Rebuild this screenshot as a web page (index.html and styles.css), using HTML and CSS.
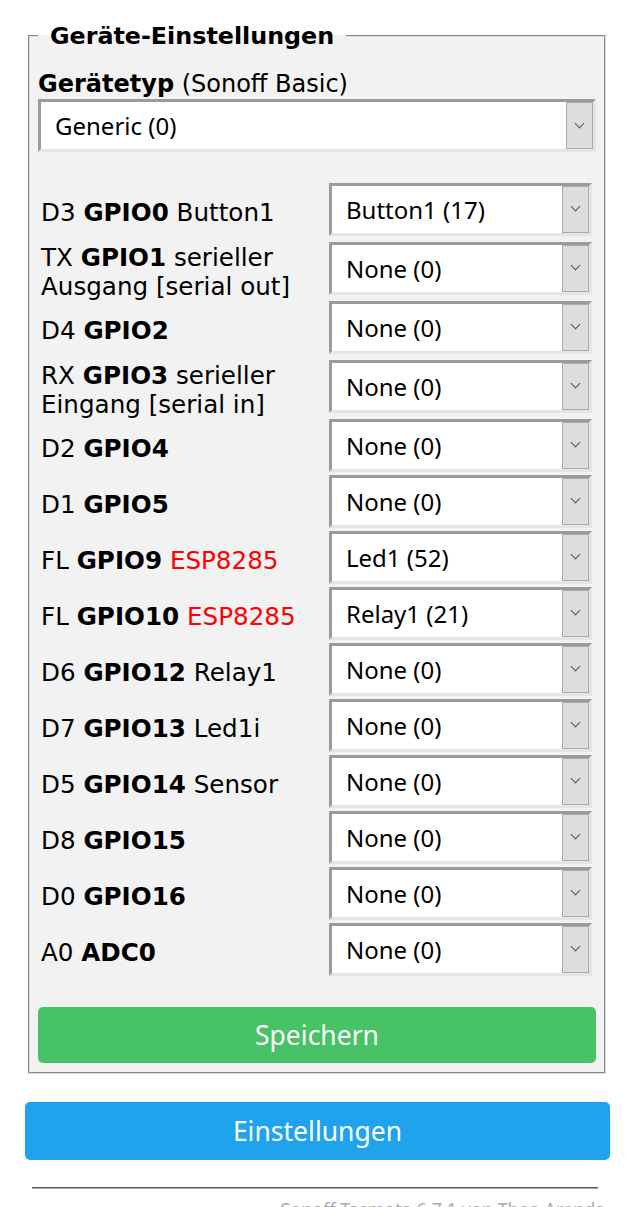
FILE: index.html
```html
<!DOCTYPE html>
<html lang="de">
<head>
    <meta charset="UTF-8">
    <meta name="viewport" content="width=device-width, initial-scale=1.0">
    <title>Sonoff Basic - Geräte-Einstellungen</title>
    <link rel="stylesheet" href="styles.css">
</head>
<body>
    <div class="main">
        <fieldset class="box">
            <legend class="box-title">Geräte-Einstellungen</legend>
            <form>
                <div class="type-line"><b>Gerätetyp</b> (Sonoff Basic)</div>
                <div class="sel">
                    <select><option>Generic (0)</option></select>
                </div>

                <div class="pins">
                    <div class="pin-row">
                        <div class="pin-label">D3 <b>GPIO0</b> Button1</div>
                        <div class="sel"><select><option>Button1 (17)</option></select></div>
                    </div>
                    <div class="pin-row">
                        <div class="pin-label">TX <b>GPIO1</b> serieller Ausgang [serial out]</div>
                        <div class="sel"><select><option>None (0)</option></select></div>
                    </div>
                    <div class="pin-row">
                        <div class="pin-label">D4 <b>GPIO2</b></div>
                        <div class="sel"><select><option>None (0)</option></select></div>
                    </div>
                    <div class="pin-row">
                        <div class="pin-label">RX <b>GPIO3</b> serieller Eingang [serial in]</div>
                        <div class="sel"><select><option>None (0)</option></select></div>
                    </div>
                    <div class="pin-row">
                        <div class="pin-label">D2 <b>GPIO4</b></div>
                        <div class="sel"><select><option>None (0)</option></select></div>
                    </div>
                    <div class="pin-row">
                        <div class="pin-label">D1 <b>GPIO5</b></div>
                        <div class="sel"><select><option>None (0)</option></select></div>
                    </div>
                    <div class="pin-row">
                        <div class="pin-label">FL <b>GPIO9</b> <span class="warn">ESP8285</span></div>
                        <div class="sel"><select><option>Led1 (52)</option></select></div>
                    </div>
                    <div class="pin-row">
                        <div class="pin-label">FL <b>GPIO10</b> <span class="warn">ESP8285</span></div>
                        <div class="sel"><select><option>Relay1 (21)</option></select></div>
                    </div>
                    <div class="pin-row">
                        <div class="pin-label">D6 <b>GPIO12</b> Relay1</div>
                        <div class="sel"><select><option>None (0)</option></select></div>
                    </div>
                    <div class="pin-row">
                        <div class="pin-label">D7 <b>GPIO13</b> Led1i</div>
                        <div class="sel"><select><option>None (0)</option></select></div>
                    </div>
                    <div class="pin-row">
                        <div class="pin-label">D5 <b>GPIO14</b> Sensor</div>
                        <div class="sel"><select><option>None (0)</option></select></div>
                    </div>
                    <div class="pin-row">
                        <div class="pin-label">D8 <b>GPIO15</b></div>
                        <div class="sel"><select><option>None (0)</option></select></div>
                    </div>
                    <div class="pin-row">
                        <div class="pin-label">D0 <b>GPIO16</b></div>
                        <div class="sel"><select><option>None (0)</option></select></div>
                    </div>
                    <div class="pin-row">
                        <div class="pin-label">A0 <b>ADC0</b></div>
                        <div class="sel"><select><option>None (0)</option></select></div>
                    </div>
                </div>

                <button type="button" class="btn btn-save">Speichern</button>
            </form>
        </fieldset>

        <button type="button" class="btn btn-back">Einstellungen</button>

        <div class="footer">
            <hr>
            <div class="footer-text">Sonoff Tasmota 6.7.1 von Theo Arends</div>
        </div>
    </div>
</body>
</html>
```

FILE: styles.css
```css
* {
    box-sizing: border-box;
}

html, body {
    margin: 0;
    padding: 0;
    background: #fff;
    overflow: hidden;
}

body {
    font-family: "DejaVu Sans", Verdana, sans-serif;
    font-size: 24px;
    color: #000;
}

.main {
    width: 585px;
    margin-left: 25px;
    padding-top: 22px;
}

.box {
    margin: 0 4px 0 3px;
    padding: 0 8px 9px 8px;
    background: #f2f2f2;
    border: 2px groove #dcdcdc;
}

.box-title {
    padding: 0 12px;
    font-size: 23.8px;
    font-weight: bold;
    line-height: 28px;
}

.type-line {
    margin-top: 20px;
    line-height: 29px;
    white-space: nowrap;
}

/* select boxes */
.sel {
    position: relative;
}

.sel select {
    display: block;
    width: 100%;
    height: 53px;
    margin: 0;
    padding: 0 30px 0 14px;
    -webkit-appearance: none;
    appearance: none;
    background: #fff;
    border: 3px solid;
    border-color: #9b9b9b #e5e5e5 #e5e5e5 #9b9b9b;
    border-radius: 0;
    font-family: "Noto Sans", Tahoma, sans-serif;
    font-size: 24px;
    color: #000;
    outline: none;
}

.sel::before {
    content: "";
    position: absolute;
    top: 3px;
    right: 3px;
    bottom: 3px;
    width: 25px;
    background: #dddddd;
    border: 1px solid #ababab;
    pointer-events: none;
}

.sel::after {
    content: "";
    position: absolute;
    top: 50%;
    right: 13px;
    width: 6px;
    height: 6px;
    margin-top: -6px;
    border-right: 1px solid #555;
    border-bottom: 1px solid #555;
    transform: rotate(45deg);
    pointer-events: none;
}

.pins {
    margin-top: 29px;
}

.pin-row {
    display: grid;
    grid-template-columns: 1fr 263px;
    column-gap: 6px;
    align-items: center;
    padding: 1.5px 4px 1.5px 3px;
}

.pin-label {
    font-size: 24.6px;
    line-height: 29px;
    padding-top: 4px;
    margin-bottom: -3px;
}

.warn {
    color: #ff0000;
}

/* buttons */
.btn {
    display: block;
    width: 100%;
    border: 0;
    border-radius: 5px;
    color: #fff;
    font-family: "Noto Sans", Tahoma, sans-serif;
    font-size: 26.5px;
    line-height: 56px;
    padding: 0;
    cursor: pointer;
}

.btn-save {
    margin-top: 30px;
    background: #47c266;
}

.btn-back {
    margin-top: 28px;
    height: 58px;
    background: #1fa3ec;
}

.footer {
    margin-top: 27px;
    padding-right: 6px;
    text-align: right;
}

.footer hr {
    margin: 0 6px 0 7px;
    border: 0;
    border-top: 1px solid #5a5a5a;
    border-bottom: 1px solid #a8a8a8;
}

.footer-text {
    margin-top: 8px;
    font-family: "Noto Sans", Tahoma, sans-serif;
    font-size: 18px;
    color: #aaa;
}
```
